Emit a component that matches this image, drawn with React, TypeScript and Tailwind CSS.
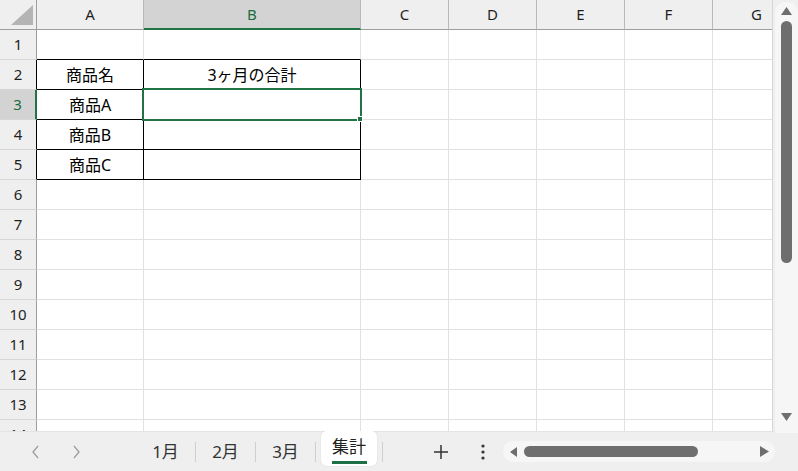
import React from 'react'

const cols = [
  { l: 'A', w: 'w-[107px]' },
  { l: 'B', w: 'w-[217px]' },
  { l: 'C', w: 'w-[88px]' },
  { l: 'D', w: 'w-[88px]' },
  { l: 'E', w: 'w-[88px]' },
  { l: 'F', w: 'w-[88px]' },
  { l: 'G', w: 'w-[88px]' },
]

const data: Record<string, string> = {
  A2: '商品名',
  B2: '3ヶ月の合計',
  A3: '商品A',
  A4: '商品B',
  A5: '商品C',
}

const rows = Array.from({ length: 14 }, (_, i) => i + 1)

function cellBorder(r: number, c: string) {
  const inTable = r >= 2 && r <= 5 && (c === 'A' || c === 'B')
  if (inTable) return 'border-r border-b border-black'
  if (r === 1 && (c === 'A' || c === 'B')) return 'border-r border-b border-r-[#e1e1e1] border-b-black'
  return 'border-r border-b border-[#e1e1e1]'
}

function rowHeadClass(r: number) {
  if (r === 3) return 'bg-[#d3d3d3] text-[#1d6b40] border-r-2 border-r-[#217346] border-b border-b-[#d6d6d6]'
  if (r === 2 || r === 4 || r === 5) return 'bg-[#efefef] text-[#1f1f1f] border-r border-r-black border-b border-b-[#d6d6d6]'
  return 'bg-[#efefef] text-[#1f1f1f] border-r border-r-[#9e9e9e] border-b border-b-[#d6d6d6]'
}

function ColHeader() {
  return (
    <div className="flex h-[30px] shrink-0">
      <div className="w-[37px] shrink-0 bg-[#efefef] border-r border-b border-[#9e9e9e] flex items-end justify-end pr-[3px] pb-[4px]">
        <svg width="22" height="20" viewBox="0 0 22 20">
          <polygon points="0,20 22,20 22,0" fill="#b4b4b4" />
        </svg>
      </div>
      {cols.map((c) =>
        c.l === 'B' ? (
          <div
            key={c.l}
            className={`${c.w} shrink-0 bg-[#d3d3d3] border-r border-r-[#b8b8b8] border-b-2 border-b-[#217346] flex items-center justify-center text-[15px] text-[#1d6b40]`}
          >
            {c.l}
          </div>
        ) : (
          <div
            key={c.l}
            className={`${c.w} shrink-0 bg-[#efefef] border-r border-r-[#b8b8b8] border-b border-b-[#9e9e9e] flex items-center justify-center text-[15px] text-[#1f1f1f]`}
          >
            {c.l}
          </div>
        )
      )}
    </div>
  )
}

function Row({ r }: { r: number }) {
  return (
    <div className="flex h-[30px] shrink-0">
      <div className={`w-[37px] shrink-0 flex items-center justify-center text-[15px] ${rowHeadClass(r)}`}>{r}</div>
      {cols.map((c) => (
        <div
          key={c.l}
          className={`${c.w} shrink-0 flex items-center justify-center text-[16px] text-black ${cellBorder(r, c.l)}`}
        >
          {data[`${c.l}${r}`] ?? ''}
        </div>
      ))}
    </div>
  )
}

function Grid() {
  return (
    <div className="relative w-[773px] h-[431px] overflow-hidden border-r border-[#d6d6d6] bg-white">
      <ColHeader />
      {rows.map((r) => (
        <Row key={r} r={r} />
      ))}
      {/* selected cell B3 */}
      <div className="absolute left-[142px] top-[88px] w-[220px] h-[33px] border-2 border-[#217346]" />
      <div className="absolute left-[357px] top-[116px] w-[6px] h-[6px] bg-[#217346] border border-white" />
    </div>
  )
}

function VScroll() {
  return (
    <div className="w-[25px] h-[431px] bg-[#efefef] pl-[2px] pt-[2px]">
      <div className="h-[431px] w-[23px] rounded-t-[10px] bg-[#f6f6f6] flex flex-col items-center">
        <svg className="mt-[5px]" width="11" height="8" viewBox="0 0 11 8">
          <polygon points="5.5,0 11,8 0,8" fill="#6e6e6e" />
        </svg>
        <div className="mt-[6px] w-[11px] h-[242px] rounded-full bg-[#6e6e6e]" />
        <div className="flex-1" />
        <svg className="mb-[12px]" width="11" height="8" viewBox="0 0 11 8">
          <polygon points="0,0 11,0 5.5,8" fill="#6e6e6e" />
        </svg>
      </div>
    </div>
  )
}

function Sep() {
  return <div className="w-px h-[20px] bg-[#cfcfcf] shrink-0" />
}

function Tab({ label }: { label: string }) {
  return (
    <div className="w-[59px] shrink-0 flex items-center justify-center text-[17px] text-[#333333] pt-[1px]">
      {label}
    </div>
  )
}

function TabBar() {
  return (
    <div className="h-[40px] bg-[#efefef] flex items-center border-t border-[#e4e4e4]">
      <svg className="ml-[31px] shrink-0" width="10" height="14" viewBox="0 0 10 14">
        <polyline points="7,1 2,7 7,13" fill="none" stroke="#a0a0a0" strokeWidth="1.4" />
      </svg>
      <svg className="ml-[30px] shrink-0" width="10" height="14" viewBox="0 0 10 14">
        <polyline points="3,1 8,7 3,13" fill="none" stroke="#a0a0a0" strokeWidth="1.4" />
      </svg>
      <div className="ml-[55px] flex items-center h-full">
        <Tab label="1月" />
        <Sep />
        <Tab label="2月" />
        <Sep />
        <Tab label="3月" />
        <Sep />
        <div className="ml-[5px] w-[56px] h-[35px] self-start -mt-px bg-white rounded-[5px] shadow-[0_0_1px_rgba(0,0,0,0.25)] flex flex-col items-center pt-[4px]">
          <span className="text-[17px] text-[#222222] leading-[23px]">集計</span>
          <div className="mt-[3px] w-[35px] h-[3px] bg-[#1e7145]" />
        </div>
        <div className="ml-[5px]">
          <Sep />
        </div>
      </div>
      <svg className="ml-[51px] shrink-0" width="14" height="14" viewBox="0 0 14 14">
        <path d="M7 0 V14 M0 7 H14" stroke="#333333" strokeWidth="1.5" />
      </svg>
      <svg className="ml-[33px] shrink-0" width="4" height="16" viewBox="0 0 4 16">
        <circle cx="2" cy="2" r="1.6" fill="#333333" />
        <circle cx="2" cy="8" r="1.6" fill="#333333" />
        <circle cx="2" cy="14" r="1.6" fill="#333333" />
      </svg>
      <div className="ml-[18px] w-[272px] h-[21px] rounded-full bg-[#f6f6f6] flex items-center shrink-0">
        <svg className="ml-[7px] shrink-0" width="7" height="10" viewBox="0 0 7 10">
          <polygon points="7,0 7,10 0,5" fill="#6e6e6e" />
        </svg>
        <div className="ml-[7px] w-[174px] h-[11px] rounded-full bg-[#6e6e6e]" />
        <div className="flex-1" />
        <svg className="mr-[6px] shrink-0" width="9" height="11" viewBox="0 0 9 11">
          <polygon points="0,0 9,5.5 0,11" fill="#6e6e6e" />
        </svg>
      </div>
    </div>
  )
}

export default function App() {
  return (
    <div className="w-[798px] h-[471px] overflow-hidden bg-[#efefef] font-['Noto_Sans','Noto_Sans_CJK_JP',sans-serif]">
      <div className="flex h-[431px]">
        <Grid />
        <VScroll />
      </div>
      <TabBar />
    </div>
  )
}
